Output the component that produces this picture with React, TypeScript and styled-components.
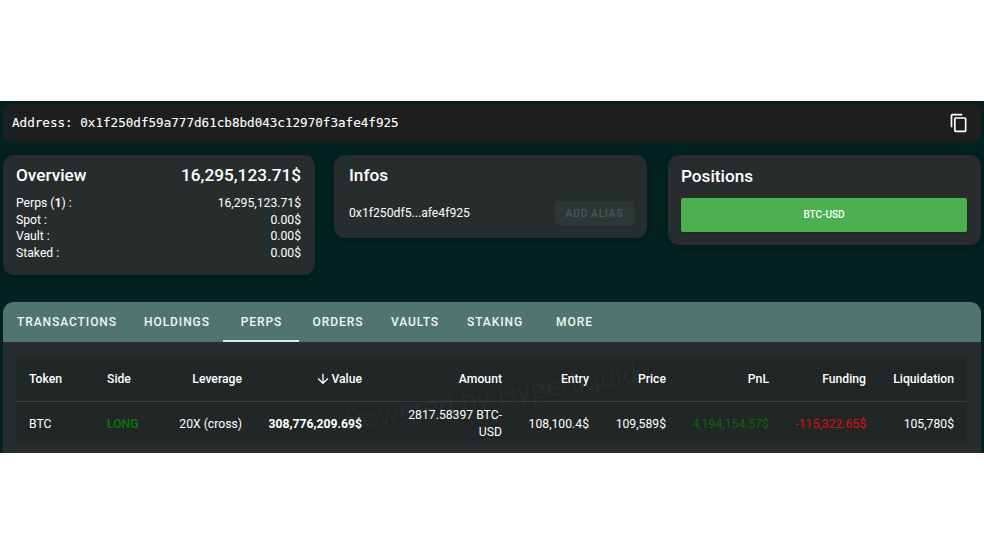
import React from "react";
import styled, { createGlobalStyle } from "styled-components";

const Global = createGlobalStyle`
  html, body { margin: 0; padding: 0; background: #ffffff; }
  body { font-family: Roboto, "Liberation Sans", sans-serif; }
`;

const Page = styled.div`
  padding: 101px 0 101px;
`;

const Stage = styled.main`
  position: relative;
  height: 352px;
  overflow: hidden;
  background: #03211e;
  padding: 3px 3px 0;
  box-sizing: border-box;
  display: flex;
  flex-direction: column;
`;

const AddressBar = styled.div`
  height: 37px;
  flex: none;
  background: #1c1f1e;
  border-radius: 7px;
  padding: 0 12px 0 9px;
  display: flex;
  align-items: center;
  justify-content: space-between;
`;

const AddressText = styled.span`
  font-family: "DejaVu Sans Mono", monospace;
  font-size: 12.6px;
  color: #ffffff;
  -webkit-text-stroke: 0.1px #ffffff;
`;

const Cards = styled.section`
  margin-top: 14px;
  display: grid;
  grid-template-columns: 331px 334px 313px;
  align-items: start;
  height: 147px;
  flex: none;
`;

const Card = styled.div<{ $w: number; $h: number }>`
  width: ${(p) => p.$w}px;
  height: ${(p) => p.$h}px;
  box-sizing: border-box;
  background: #272d2d;
  border-radius: 11px;
  padding: 10px 14px 10px 13px;
  color: #ffffff;
  box-shadow: 0 2px 6px rgba(0, 0, 0, 0.2);
`;

const OverviewHead = styled.div`
  display: flex;
  justify-content: space-between;
  align-items: center;
  height: 21px;
  margin-top: -1px;
  font-size: 17.2px;
  font-weight: 500;
`;

const CardTitle = styled.h2<{ $mt?: number; $ml?: number }>`
  margin: ${(p) => p.$mt ?? 0}px 0 0 ${(p) => p.$ml ?? 0}px;
  font-size: 17.2px;
  font-weight: 500;
  line-height: 21px;
`;

const Rows = styled.div`
  margin-top: 10px;
`;

const Row = styled.div`
  display: flex;
  justify-content: space-between;
  font-size: 12.2px;
  line-height: 16.5px;
`;

const AliasRow = styled.div`
  margin: 15px -1px 0 2px;
  display: flex;
  justify-content: space-between;
  align-items: center;
  font-size: 12.2px;
`;

const AliasButton = styled.div`
  width: 79px;
  height: 24px;
  border-radius: 3px;
  background: #2d3736;
  color: #435a56;
  font-size: 10.2px;
  font-weight: 500;
  letter-spacing: 0.75px;
  display: flex;
  align-items: center;
  justify-content: center;
`;

const PositionButton = styled.div`
  margin-top: 11px;
  height: 34px;
  border-radius: 2px;
  background: #4caf50;
  color: #ffffff;
  font-size: 10px;
  font-weight: 500;
  padding-bottom: 2px;
  box-sizing: border-box;
  display: flex;
  align-items: center;
  justify-content: center;
  box-shadow: 0 1px 3px rgba(0, 0, 0, 0.25);
`;

const Panel = styled.section`
  flex: 1;
  background: #272c2c;
  border-radius: 11px 11px 0 0;
  overflow: hidden;
`;

const Tabs = styled.nav`
  height: 40px;
  background: #4f756e;
  display: flex;
`;

const Tab = styled.div<{ $w: number; $on?: boolean }>`
  width: ${(p) => p.$w}px;
  flex: none;
  box-sizing: border-box;
  display: flex;
  align-items: center;
  justify-content: center;
  padding: 2px 0 0 1px;
  color: #f2f5f4;
  font-size: 12px;
  font-weight: 500;
  letter-spacing: 0.92px;
  border-bottom: 2px solid ${(p) => (p.$on ? "#e4e9e8" : "transparent")};
`;

const TableWrap = styled.div`
  margin: 13px 14px 0 13px;
  background: #212627;
`;

const TableRow = styled.div<{ $h: number; $line?: boolean }>`
  height: ${(p) => p.$h}px;
  box-sizing: border-box;
  display: grid;
  grid-template-columns: 78px 61px 100px 120px 140px 87px 77px 103px 97px 88px;
  align-items: center;
  padding-top: 1px;
  border-bottom: ${(p) => (p.$line ? "1px solid #373c3d" : "none")};
`;

const Cell = styled.div<{ $left?: boolean; $bold?: boolean; $head?: boolean; $color?: string; $wrap?: boolean }>`
  padding: ${(p) => (p.$left ? "0 0 0 13px" : p.$wrap ? "0 13px 0 30px" : "0 13px 0 0")};
  text-align: ${(p) => (p.$left ? "left" : "right")};
  font-size: 12.2px;
  line-height: ${(p) => (p.$wrap ? 17 : 18)}px;
  font-weight: ${(p) => (p.$bold ? 700 : p.$head ? 500 : 400)};
  color: ${(p) => p.$color ?? "#ffffff"};
`;

const SortHead = styled(Cell)`
  display: flex;
  justify-content: flex-end;
  align-items: center;
`;

const Watermark = styled.div`
  position: absolute;
  left: 343px;
  top: 304px;
  font-size: 27.5px;
  font-weight: 300;
  letter-spacing: 0.6px;
  color: rgba(130, 190, 170, 0.08);
  transform: rotate(-9.5deg);
  transform-origin: left top;
  white-space: nowrap;
  pointer-events: none;
`;

const CopyIcon = () => (
  <svg width="20" height="20" viewBox="0 0 24 24" fill="#ffffff">
    <path d="M16 1H4c-1.1 0-2 .9-2 2v14h2V3h12V1zm3 4H8c-1.1 0-2 .9-2 2v14c0 1.1.9 2 2 2h11c1.1 0 2-.9 2-2V7c0-1.1-.9-2-2-2zm0 16H8V7h11v14z" />
  </svg>
);

const ArrowDown = () => (
  <svg width="16" height="16" viewBox="0 0 24 24" fill="#ffffff">
    <path d="M20 12l-1.41-1.41L13 16.17V4h-2v12.17l-5.58-5.59L4 12l8 8 8-8z" />
  </svg>
);

const tabs: [string, number, boolean?][] = [
  ["TRANSACTIONS", 127],
  ["HOLDINGS", 93],
  ["PERPS", 76, true],
  ["ORDERS", 77],
  ["VAULTS", 77],
  ["STAKING", 83],
  ["MORE", 76],
];

const overview: [React.ReactNode, string][] = [
  [<>Perps (<b>1</b>) :</>, "16,295,123.71$"],
  ["Spot :", "0.00$"],
  ["Vault :", "0.00$"],
  ["Staked :", "0.00$"],
];

export default function App() {
  return (
    <Page>
      <Global />
      <Stage>
        <AddressBar>
          <AddressText>Address: 0x1f250df59a777d61cb8bd043c12970f3afe4f925</AddressText>
          <CopyIcon />
        </AddressBar>
        <Cards>
          <Card $w={312} $h={120}>
            <OverviewHead>
              <span>Overview</span>
              <span>16,295,123.71$</span>
            </OverviewHead>
            <Rows>
              {overview.map(([k, v], i) => (
                <Row key={i}>
                  <span>{k}</span>
                  <span>{v}</span>
                </Row>
              ))}
            </Rows>
          </Card>
          <Card $w={313} $h={83}>
            <CardTitle $ml={2}>Infos</CardTitle>
            <AliasRow>
              <span>0x1f250df5...afe4f925</span>
              <AliasButton>ADD ALIAS</AliasButton>
            </AliasRow>
          </Card>
          <Card $w={313} $h={90}>
            <CardTitle $mt={1}>Positions</CardTitle>
            <PositionButton>BTC-USD</PositionButton>
          </Card>
        </Cards>
        <Panel>
          <Tabs>
            {tabs.map(([t, w, on]) => (
              <Tab key={t} $w={w} $on={on}>{t}</Tab>
            ))}
          </Tabs>
          <TableWrap>
            <TableRow $h={47} $line>
              <Cell $left $head>Token</Cell>
              <Cell $left $head>Side</Cell>
              <Cell $head>Leverage</Cell>
              <SortHead $head><ArrowDown />Value</SortHead>
              <Cell $head>Amount</Cell>
              <Cell $head>Entry</Cell>
              <Cell $head>Price</Cell>
              <Cell $head>PnL</Cell>
              <Cell $head>Funding</Cell>
              <Cell $head>Liquidation</Cell>
            </TableRow>
            <TableRow $h={43}>
              <Cell $left>BTC</Cell>
              <Cell $left $head $color="#0a7a0a">LONG</Cell>
              <Cell>20X (cross)</Cell>
              <Cell $bold>308,776,209.69$</Cell>
              <Cell $wrap>2817.58397 BTC-USD</Cell>
              <Cell>108,100.4$</Cell>
              <Cell>109,589$</Cell>
              <Cell $color="#0a640a">4,194,154.57$</Cell>
              <Cell $color="#e00b0b">-115,322.65$</Cell>
              <Cell>105,780$</Cell>
            </TableRow>
          </TableWrap>
        </Panel>
        <Watermark>Powered by Hyperliquid</Watermark>
      </Stage>
    </Page>
  );
}
